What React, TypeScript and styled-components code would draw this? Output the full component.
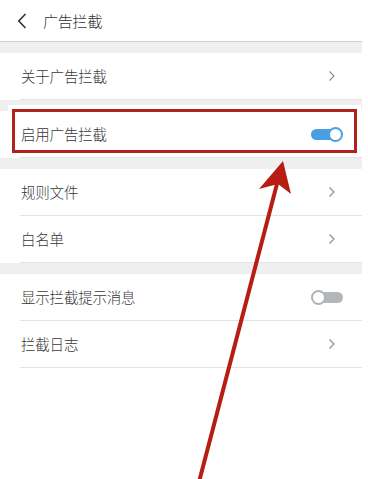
import React from "react";
import styled, { createGlobalStyle } from "styled-components";

const Global = createGlobalStyle`
  html, body { margin: 0; padding: 0; background: #ffffff; }
  body { font-family: "Noto Sans CJK SC", "Noto Sans", sans-serif; color: #333; }
`;

const Page = styled.div`
  position: relative;
  width: 368px;
  height: 479px;
  overflow: hidden;
  background: #fff;
`;

const Screen = styled.div`
  width: 362px;
  display: flex;
  flex-direction: column;
`;

const Header = styled.div`
  height: 41px;
  display: flex;
  align-items: center;
  border-bottom: 1px solid #cfcfcf;
  padding-left: 17px;
  gap: 16px;
`;

const Title = styled.span`
  font-size: 15px;
  line-height: 20px;
  font-weight: 300;
  color: #333;
  letter-spacing: -0.2px;
`;

const Band = styled.div<{ $h: number }>`
  height: ${(p) => p.$h}px;
  background: #efefef;
`;

const Row = styled.div`
  position: relative;
  height: 46px;
  margin-left: 20px;
  padding-left: 1px;
  padding-right: 26px;
  display: flex;
  align-items: center;
  justify-content: space-between;
  border-bottom: 1px solid #e4e4e4;
`;

const Label = styled.span`
  font-size: 14.5px;
  line-height: 20px;
  font-weight: 300;
  color: #383838;
  letter-spacing: -0.2px;
`;

const Highlight = styled.div`
  position: absolute;
  left: -8px;
  right: 5px;
  top: -2px;
  bottom: 4px;
  border: 3.5px solid #b0221b;
  box-shadow: 0 0 0 4px #fff;
  pointer-events: none;
`;

const Track = styled.div<{ $on: boolean }>`
  position: relative;
  width: 31px;
  height: 11px;
  border-radius: 6px;
  background: ${(p) => (p.$on ? "#4a9fe2" : "#b4b7b9")};
  margin-right: ${(p) => (p.$on ? "-6px" : "-7px")};
`;

const Knob = styled.div<{ $on: boolean }>`
  position: absolute;
  top: 50%;
  ${(p) => (p.$on ? "right: -1px;" : "left: -1px;")}
  width: 11px;
  height: 11px;
  margin-top: -7.5px;
  border-radius: 50%;
  background: #fff;
  border: 2px solid ${(p) => (p.$on ? "#4a9fe2" : "#b0b3b5")};
`;

const Overlay = styled.svg`
  position: absolute;
  left: 0;
  top: 0;
  pointer-events: none;
`;

const Chevron = () => (
  <svg width="8" height="12" viewBox="0 0 8 12">
    <path d="M1.5 1.5 L6 6 L1.5 10.5" fill="none" stroke="#8a8a8a" strokeWidth="1.1" />
  </svg>
);

const Back = () => (
  <svg width="10" height="16" viewBox="0 0 10 16">
    <path d="M8.5 1 L1.8 8 L8.5 15" fill="none" stroke="#333" strokeWidth="1.6" />
  </svg>
);

const Toggle = ({ on }: { on: boolean }) => (
  <Track $on={on}>
    <Knob $on={on} />
  </Track>
);

export default function App() {
  return (
    <Page>
      <Global />
      <Screen>
        <Header>
          <Back />
          <Title>广告拦截</Title>
        </Header>
        <Band $h={11} />
        <Row>
          <Label>关于广告拦截</Label>
          <Chevron />
        </Row>
        <Band $h={11} />
        <Row>
          <Label>启用广告拦截</Label>
          <Toggle on />
          <Highlight />
        </Row>
        <Band $h={11} />
        <Row>
          <Label>规则文件</Label>
          <Chevron />
        </Row>
        <Row>
          <Label>白名单</Label>
          <Chevron />
        </Row>
        <Band $h={11} />
        <Row>
          <Label>显示拦截提示消息</Label>
          <Toggle on={false} />
        </Row>
        <Row>
          <Label>拦截日志</Label>
          <Chevron />
        </Row>
      </Screen>
      <Overlay width="368" height="479" viewBox="0 0 368 479">
        <line x1="199" y1="482" x2="278" y2="180" stroke="#b81d14" strokeWidth="4" strokeLinecap="round" />
        <polygon points="283,161 291,194 278,184 259,189" fill="#b81d14" />
      </Overlay>
    </Page>
  );
}
